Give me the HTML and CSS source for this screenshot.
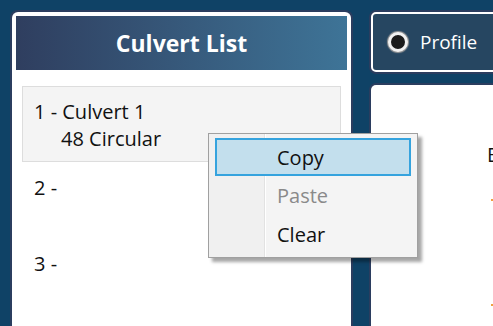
FILE: index.html
```html
<!DOCTYPE html>
<html lang="en">
<head>
  <meta charset="UTF-8" />
  <title>Culvert List</title>
  <link rel="stylesheet" href="styles.css">
</head>
<body>
  <div class="screen">
    <div class="list-panel">
      <div class="list-header">Culvert List</div>
      <div class="list">
        <div class="item selected">
          <div>1 - Culvert 1</div>
          <div class="sub">48 Circular</div>
        </div>
        <div class="item"><div>2 -</div></div>
        <div class="item"><div>3 -</div></div>
      </div>
    </div>

    <div class="right-col">
      <div class="tab">
        <span class="radio"></span>
        <span>Profile</span>
      </div>
      <div class="view-panel">
        <div class="view-label">E</div>
        <span class="tick tick-1"></span>
        <span class="tick tick-2"></span>
      </div>
    </div>
  </div>

  <!-- context menu over the first list item -->
  <div class="menu">
    <div class="menu-item active"><span class="gutter"></span><span class="label">Copy</span></div>
    <div class="menu-item disabled"><span class="gutter"></span><span class="label">Paste</span></div>
    <div class="menu-item"><span class="gutter"></span><span class="label">Clear</span></div>
  </div>
</body>
</html>
```

FILE: styles.css
```css
html, body {
  height: 100%;
  overflow: hidden;
}
body {
  margin: 0;
  background: #0f4266;
  font-family: "Open Sans", "Noto Sans", sans-serif;
}
.screen {
  display: flex;
  gap: 20px;
  padding: 12px 0 0 12px;
  height: 326px;
  box-sizing: border-box;
  overflow: hidden;
}
.list-panel {
  width: 339px;
  height: 322px;
  box-sizing: border-box;
  padding: 4px;
  background: white;
  border-radius: 6px 6px 0 0;
  box-shadow: 0 0 0 2px #2b3d5f;
  flex-shrink: 0;
}
.list-header {
  height: 54px;
  background: linear-gradient(to right, #2f3e5f, #3e7497);
  color: white;
  font-weight: bold;
  font-size: 23px;
  display: flex;
  align-items: center;
  justify-content: center;
}
.list {
  padding: 16px 6px;
}
.item {
  height: 76px;
  box-sizing: border-box;
  padding: 11px 11px;
  border: 1px solid transparent;
  font-size: 20px;
  line-height: 27px;
  color: #111;
}
.item.selected {
  background: #f4f4f4;
  border-color: #dddddd;
}
.item .sub {
  padding-left: 27px;
}
.right-col {
  display: flex;
  flex-direction: column;
  gap: 13px;
  flex: 1;
}
.tab {
  height: 60px;
  box-sizing: border-box;
  border: 2px solid white;
  border-radius: 5px;
  background: #264661;
  box-shadow: 0 0 0 2px #2b3d5f;
  color: white;
  font-size: 19px;
  display: flex;
  align-items: center;
  gap: 12px;
  padding-left: 15px;
}
.radio {
  width: 14px;
  height: 14px;
  border-radius: 50%;
  background: #1c1c1c;
  border: 3px solid #f2f2f2;
  box-shadow: 0 0 1px 1px #9a9a9a;
}
.view-panel {
  flex: 1;
  background: white;
  border-radius: 5px 0 0 0;
  box-shadow: 0 0 0 2px #2b3d5f;
  position: relative;
}
.view-label {
  padding: 56px 0 0 116px;
  font-size: 20px;
  color: #111;
  white-space: nowrap;
  overflow: hidden;
}
.tick {
  position: absolute;
  left: 120px;
  width: 2px;
  height: 2px;
  background: #f0a040;
}
.tick-1 { top: 114px; }
.tick-2 { top: 219px; }
.menu {
  position: absolute;
  left: 208px;
  top: 133px;
  width: 210px;
  height: 125px;
  box-sizing: border-box;
  border: 1px solid #a0a0a0;
  background: linear-gradient(to right, #f0f0f0 55px, #e2e2e2 55px, #e2e2e2 56px, #ffffff 56px, #ffffff 57px, #f4f4f4 57px);
  box-shadow: 4px 4px 3px rgba(0, 0, 0, 0.35);
  padding: 4px 6px 2px 6px;
  font-size: 20px;
  color: #111;
}
.menu-item {
  height: 39px;
  box-sizing: border-box;
  display: flex;
  align-items: center;
  border: 1px solid transparent;
}
.menu-item .gutter {
  width: 61px;
}
.menu-item.active {
  height: 38px;
  background: #c3dfed;
  border: 2px solid #35a3de;
}
.menu-item.active .gutter {
  width: 60px;
}
.menu-item.disabled {
  color: #8a8a8a;
}
```
